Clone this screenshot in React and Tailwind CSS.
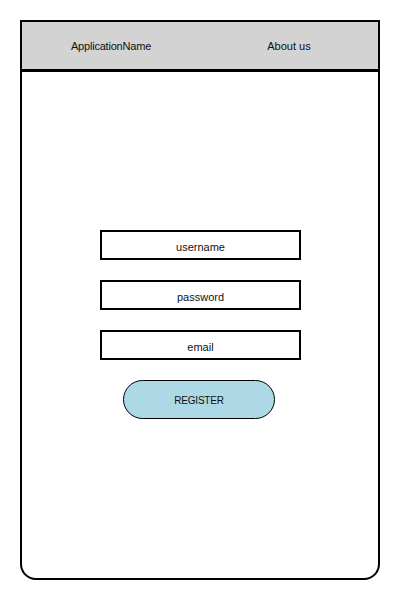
export default function App() {
  const fields = ['username', 'password', 'email'];

  return (
    <div className="w-[400px] h-[600px] bg-white p-5 font-['Liberation_Sans',Arial,sans-serif] text-[11px] text-[#111]">
      <div className="flex flex-col h-[560px] border-2 border-black rounded-b-2xl overflow-hidden">
        <header className="grid grid-cols-2 h-[50px] pt-[2px] bg-[#d3d3d3] border-b-[3px] border-black items-center">
          <div className="text-center tracking-[-0.2px]">ApplicationName</div>
          <div className="text-center">About us</div>
        </header>

        <main className="flex flex-col items-center gap-5 pt-[158px]">
          {fields.map((f) => (
            <div
              key={f}
              className="w-[201px] h-[30px] ml-[1px] pt-[4px] border-2 border-black flex items-center justify-center"
            >
              {f}
            </div>
          ))}
          <button className="w-[152px] h-[39px] mr-[2px] pt-[1px] rounded-full border-[1.5px] border-black bg-[#add8e6] text-[10px] tracking-[-0.2px]">
            REGISTER
          </button>
        </main>
      </div>
    </div>
  );
}
